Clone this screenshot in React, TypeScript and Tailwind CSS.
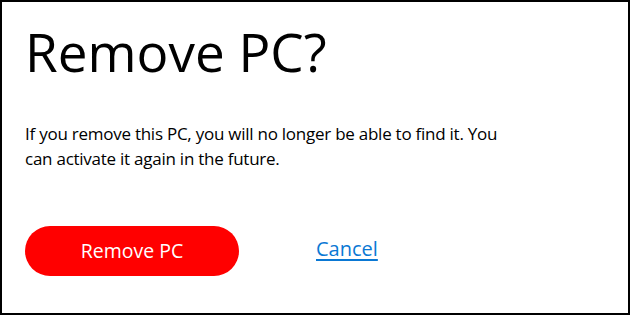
export default function App() {
    return (
        <div className="w-[630px] h-[315px] bg-white border-2 border-black flex flex-col pl-[23px] pr-6 text-black" style={{ fontFamily: '"Segoe UI", "Open Sans", sans-serif' }}>
            <h1 className="text-[53px] leading-[60px] mt-[20px]">Remove PC?</h1>
            <p className="w-[495px] text-[17px] leading-[25px] mt-[39px] tracking-[-0.25px]">
                If you remove this PC, you will no longer be able to find it. You can activate it again in the future.
            </p>
            <div className="flex items-center mt-[55px]">
                <button className="w-[214px] h-[50px] rounded-full bg-[#ff0000] text-white text-[19.5px]">
                    Remove PC
                </button>
                <a href="#" className="ml-[77px] text-[20px] text-[#0a78d4] underline underline-offset-[3px] mb-[5px]">
                    Cancel
                </a>
            </div>
        </div>
    )
}
